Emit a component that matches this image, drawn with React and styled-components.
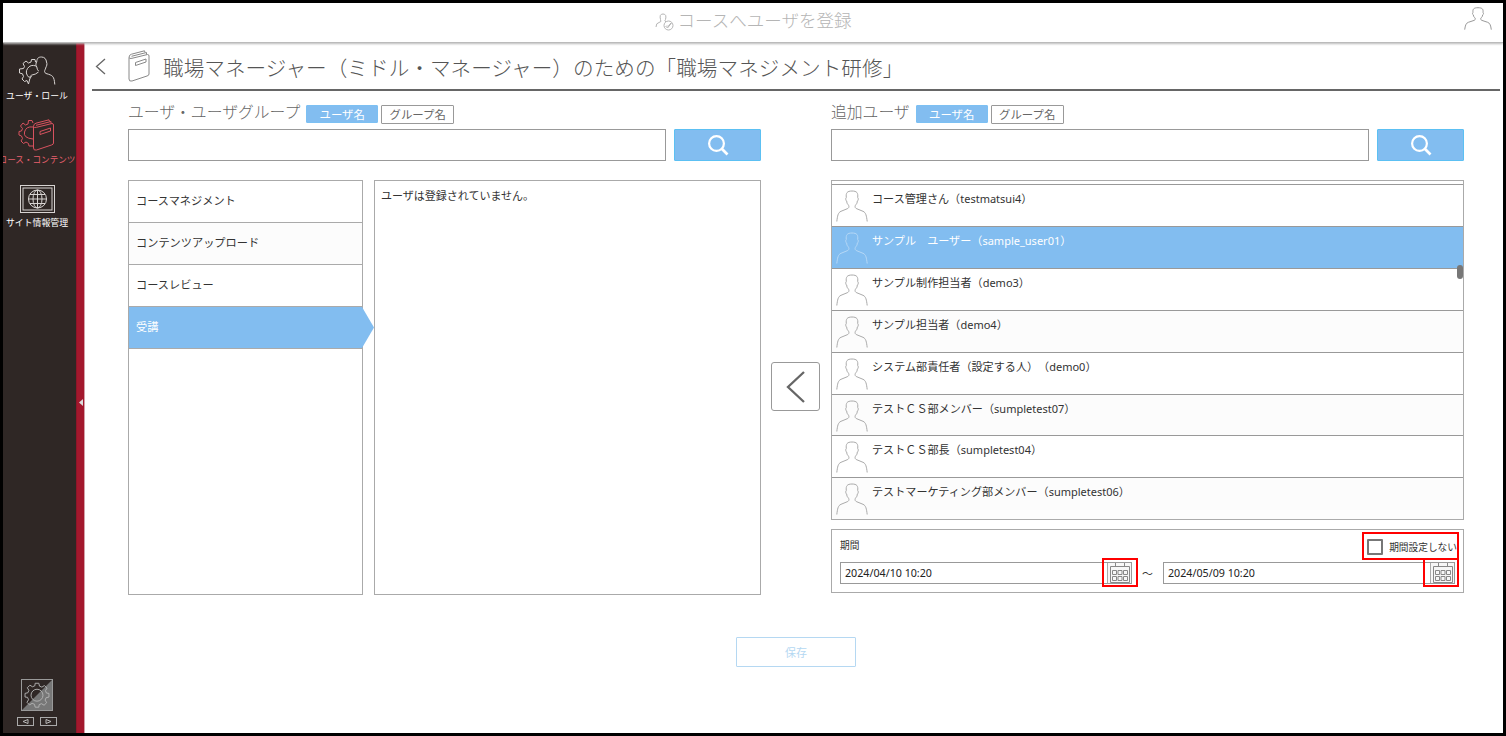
import React from 'react';
import styled, { createGlobalStyle } from 'styled-components';

const GlobalStyle = createGlobalStyle`
  * {
    box-sizing: border-box;
  }
  body {
    margin: 0;
    font-family: "Noto Sans", "Noto Sans CJK JP", sans-serif;
    font-size: 11px;
    color: #333;
    text-spacing-trim: space-all;
  }
`;

const Frame = styled.div`
  width: 1506px;
  height: 736px;
  border: 3px solid #000;
  background: #fff;
  display: flex;
  flex-direction: column;
  overflow: hidden;
`;

const Header = styled.header`
  position: relative;
  display: flex;
  flex: none;
  align-items: center;
  justify-content: center;
  height: 40px;
  padding-bottom: 5px;
  background: #fff;
  border-bottom: 1px solid #bbb;
  box-shadow: 0 1px 2px #bbb;
  z-index: 1;
  color: #b5b5b5;
  font-family: "Noto Sans CJK JP", sans-serif;
  font-size: 17.5px;
  font-weight: 300;
  line-height: 34px;
  svg {
    margin: 3px 4px 0 0;
  }
`;

const Account = styled.div`
  position: absolute;
  right: 7px;
  top: 1px;
  height: 28px;
  color: #999;
  line-height: 0;
`;

const Body = styled.div`
  display: flex;
  flex: 1;
  min-height: 0;
`;

const Sidebar = styled.nav`
  display: flex;
  flex-direction: column;
  align-items: center;
  width: 73px;
  padding-top: 13px;
  background: #2f2725;
  overflow: hidden;
`;

const NavItem = styled.a`
  display: flex;
  flex: none;
  flex-direction: column;
  align-items: center;
  height: ${props => (props.$active ? '66px' : '63px')};
  margin-left: -5px;
  color: ${props => (props.$active ? '#e8606e' : '#fff')};
  font-family: "Noto Sans CJK JP", sans-serif;
  font-size: ${props => (props.$active ? '8.6px' : '8.9px')};
  line-height: 14px;
  white-space: nowrap;
  svg {
    margin-bottom: ${props => (props.$active ? '1px' : '3px')};
    color: ${props => (props.$active ? '#d8525f' : '#d8d4d2')};
  }
`;

const Settings = styled.div`
  display: flex;
  flex-direction: column;
  align-items: center;
  margin: auto 0 7px -5px;
`;

const Pager = styled.div`
  display: flex;
  gap: 6px;
  margin-top: 6px;
`;

const PagerButton = styled.span`
  display: flex;
  align-items: center;
  justify-content: center;
  width: 17px;
  height: 9px;
  border: 1px solid #aaa;
`;

const Divider = styled.div`
  display: flex;
  align-items: center;
  justify-content: center;
  width: 9px;
  padding-top: 29px;
  background: #a3182d;
  border-left: 1px solid #8d1629;
  border-right: 1px solid #d3a0a8;
`;

const Main = styled.main`
  flex: 1;
  padding: 1px 3px 0 7px;
`;

const Title = styled.h1`
  display: flex;
  align-items: center;
  height: 47px;
  margin: 0;
  padding-left: 3px;
  border-bottom: 2px solid #666;
  color: #555;
  font-family: "Noto Sans CJK JP", sans-serif;
  font-size: 20.6px;
  font-weight: 300;
  letter-spacing: 0.05px;
  line-height: 30px;
  white-space: nowrap;
  .book {
    margin: 0 13px 2px 22px;
  }
`;

const Columns = styled.div`
  display: flex;
  padding: 9px 0 0 36px;
`;

const Column = styled.section`
  width: 633px;
`;

const Transfer = styled.div`
  display: flex;
  flex: none;
  justify-content: center;
  width: 70px;
  padding-top: 262px;
`;

const MoveButton = styled.button`
  display: flex;
  align-items: center;
  justify-content: center;
  flex: none;
  width: 49px;
  height: 49px;
  margin-right: 1px;
  padding: 0;
  background: #fff;
  border: 1px solid #999;
  border-radius: 3px;
`;

const Heading = styled.div`
  display: flex;
  align-items: center;
  height: 29px;
  padding-bottom: 5px;
  color: #666;
  font-family: "Noto Sans CJK JP", sans-serif;
  font-size: 15.8px;
  font-weight: 300;
  line-height: 24px;
`;

const Tab = styled.button`
  width: ${props => (props.$on ? '72px' : '73px')};
  height: ${props => (props.$on ? '18px' : '19px')};
  margin: 4px 0 0 ${props => (props.$on ? '6px' : '3px')};
  padding: 0;
  background: ${props => (props.$on ? '#82bdf0' : '#fff')};
  border: 1px solid ${props => (props.$on ? '#7cc0f3' : '#999')};
  border-radius: 1px;
  color: ${props => (props.$on ? '#fff' : '#666')};
  font-family: "Noto Sans CJK JP", sans-serif;
  font-size: 11.4px;
  line-height: 15px;
`;

const SearchBar = styled.div`
  display: flex;
  justify-content: space-between;
  height: 32px;
`;

const SearchInput = styled.input`
  width: 538px;
  border: 1px solid #999;
  outline: none;
`;

const SearchButton = styled.button`
  display: flex;
  align-items: center;
  justify-content: center;
  width: 87px;
  padding: 0;
  background: #82bdf0;
  border: 1px solid #5cc0f3;
  border-radius: 1px;
`;

const Lists = styled.div`
  display: flex;
  gap: 11px;
  height: 415px;
  margin-top: 19px;
`;

const RoleList = styled.div`
  width: 235px;
  border: 1px solid #aaa;
`;

const Role = styled.div`
  position: relative;
  height: 42px;
  padding: 11px 7px;
  background: ${props => (props.$selected ? '#82bdf0' : props.$alt ? '#fcfcfc' : '#fff')};
  border-bottom: 1px solid #aaa;
  color: ${props => (props.$selected ? '#fff' : '#333')};
  font-size: 11.2px;
  line-height: 17px;
`;

const Pointer = styled.svg`
  position: absolute;
  left: 233px;
  top: 0;
`;

const Members = styled.div`
  flex: 1;
  padding: 6px 6px;
  border: 1px solid #aaa;
  line-height: 17px;
`;

const UserList = styled.div`
  position: relative;
  height: 340px;
  margin-top: 19px;
  padding-top: 3px;
  border: 1px solid #aaa;
  overflow: hidden;
`;

const User = styled.div`
  display: flex;
  gap: 4px;
  height: 41.92px;
  padding-left: 4px;
  background: ${props => (props.$selected ? '#82bdf0' : props.$alt ? '#fcfcfc' : '#fff')};
  border-top: 1px solid #999;
  color: ${props => (props.$selected ? '#fff' : '#333')};
  font-size: 11.1px;
  line-height: 17px;
  white-space: pre;
  svg {
    flex: none;
    margin-top: 5px;
    color: ${props => (props.$selected ? '#b6d8f6' : '#aaa')};
  }
  p {
    margin: 5px 0 0;
  }
`;

const Login = styled.span`
  font-size: 11px;
`;

const Thumb = styled.div`
  position: absolute;
  right: 0;
  top: 84px;
  width: 6px;
  height: 14px;
  background: #777;
  border-radius: 3px;
`;

const Period = styled.div`
  position: relative;
  height: 64px;
  margin-top: 9px;
  padding: 0 8px;
  border: 1px solid #aaa;
`;

const PeriodHead = styled.div`
  display: flex;
  align-items: center;
  justify-content: space-between;
  height: 32px;
  padding-top: 1px;
  font-size: 9.7px;
`;

const PeriodLabel = styled.span`
  padding-bottom: 3px;
`;

const CheckLabel = styled.label`
  display: flex;
  align-items: center;
  gap: 6px;
  margin-right: -2px;
  white-space: nowrap;
`;

const Checkbox = styled.span`
  width: 16px;
  height: 16px;
  border: 2px solid #777;
  border-radius: 1px;
`;

const Dates = styled.div`
  display: flex;
  align-items: center;
  justify-content: space-between;
`;

const DateField = styled.div`
  display: flex;
  align-items: center;
  justify-content: space-between;
  width: 292px;
  height: 22px;
  padding-left: 4px;
  border: 1px solid #999;
  color: #222;
  font-size: 10.7px;
  line-height: 18px;
`;

const DateButton = styled.span`
  display: flex;
  justify-content: center;
  width: 24px;
  height: 20px;
  background: #f7f7f7;
  border-left: 1px solid #aaa;
`;

const Mark = styled.div`
  position: absolute;
  left: ${props => props.$x}px;
  top: ${props => props.$y}px;
  width: ${props => props.$w}px;
  height: ${props => props.$h}px;
  border: 2px solid #f00;
`;

const SaveButton = styled.button`
  display: block;
  width: 120px;
  height: 30px;
  margin: 42px 0 0 644px;
  background: #fff;
  border: 1px solid #b5d8f2;
  border-radius: 1px;
  color: #b5d8f2;
  font-family: "Noto Sans CJK JP", sans-serif;
  font-size: 11px;
  line-height: 24px;
`;

const GEAR = 'M-2-12h4l.7 3.1 2.6 1.1 2.8-1.7 2.8 2.8-1.7 2.8 1.1 2.6L13-1v4l-3.1.7-1.1 2.6 1.7 2.8-2.8 2.8-2.8-1.7-2.6 1.1L2 14h-4l-.7-3.1-2.6-1.1-2.8 1.7-2.8-2.8 1.7-2.8-1.1-2.6L-13 3v-4l3.1-.7 1.1-2.6-1.7-2.8 2.8-2.8 2.8 1.7 2.6-1.1z';
const BOOK = 'M1 7.5Q1.500 9 4 8.300L19.500 4.500Q21 4.500 21 6V24Q21 25.500 19 26L4 31Q1 31.800 1 29ZM1 7.500Q1 4.800 3.500 4.200L16.500 .8 17 2.500M3.500 6.300 18.500 2.500V4.500M7.500 12.500 18 9V12L7.500 15.500Z';

const PersonIcon = ({ width = 32, height = 32 }) => (
  <svg width={width} height={height} viewBox="0 0 32 32" fill="none" stroke="currentColor" preserveAspectRatio="none">
    <path vectorEffect="non-scaling-stroke" d="M.8 31.500C1.500 26 2 22.500 5 21.300L11.800 18.500C13.500 17.500 13 15.500 12 14.500C11 13.500 10.800 12.500 10.700 11C9.500 10.500 9.500 8 10.300 7.500C9.800 3 11 1 16 1S22.200 3 21.700 7.500C22.500 8 22.500 10.500 21.300 11C21.200 12.500 21 13.500 20 14.500C19 15.500 18.500 17.500 20.200 18.500L27 21.300C30 22.500 30.500 26 31.200 31.500" />
  </svg>
);

const UserRoleIcon = () => (
  <svg width="38" height="30" viewBox="0 0 38 30" fill="none" stroke="currentColor">
    <path d="M18.500 6H17.500L17 3.500H13.500L13 6 10.500 7 8 5 5 7.500 6.500 10.500 5.500 12.500 1.500 13V17L4.500 17.800 5.500 20.500 4 23 6.500 25.500 9 24.500 10.500 28Q11.500 22 13.500 20" />
    <path d="M18 10Q12.500 8 9.500 12.500T11 21.500Q13 18.500 17.500 18L20.500 16" />
    <path d="M18.800 11C17.300 9 18 7 18.700 6C19 2 20.500 1 23.500 1S28.200 3 28.500 6C29.500 8 28.500 10.500 28 11C27.500 14 25 15.500 28 17.500C35 19.500 36 20 36.800 28.500M18.800 11Q19 13.500 20.500 15" />
  </svg>
);

const CourseIcon = () => (
  <svg width="37" height="32" viewBox="0 0 37 32" fill="none" stroke="currentColor">
    <path d="M15 4 14 1.500H10.500L10 5 7.500 6 5 4 2.500 7 4.500 9.500 3.500 12 1 12.500V16L3.500 17 4.500 19.500 3 22 5.500 24.500 8 23 10.500 24.500 11 27H15" />
    <path d="M15 8Q8 7 6.500 13T15 20" />
    <g transform="translate(14.500 0)">
      <path d={BOOK} />
    </g>
  </svg>
);

const SiteIcon = () => (
  <svg width="35" height="28" viewBox="0 0 35 28" fill="none" stroke="currentColor">
    <rect x=".5" y=".5" width="34" height="27" />
    <rect x="3" y="3" width="29" height="22" />
    <circle cx="17.500" cy="14" r="9" />
    <ellipse cx="17.500" cy="14" rx="4.500" ry="9" />
    <path d="M17.500 5v18M8.500 14h18M10 9.500h15M10 18.500h15" />
  </svg>
);

const GearIcon = () => (
  <svg width="32" height="32" viewBox="0 0 32 32" fill="none">
    <path d="M32 0V32H0Z" fill="#777" />
    <rect x=".5" y=".5" width="31" height="31" stroke="#999" />
    <g stroke="#b5b5b5" transform="translate(16 15.300) scale(.92)">
      <path d={GEAR} />
      <circle cy="1" r="6.500" />
    </g>
  </svg>
);

const BookIcon = () => (
  <svg className="book" width="22" height="32" viewBox="0 0 22 32" fill="none" stroke="#888">
    <path d={BOOK} />
  </svg>
);

const EnrollIcon = () => (
  <svg width="19" height="18" viewBox="0 0 19 18" fill="none" stroke="currentColor">
    <path d="M1 14Q1 10 4 9.500Q7 9 5.500 6.500Q4 1 8 1T10.500 6.500Q9 8 11 9" />
    <circle cx="13.500" cy="12.500" r="4.500" />
    <path d="M10.500 13 12.500 15 16.500 10M12 12.500 13 13.500 16 10" />
  </svg>
);

const SearchIcon = () => (
  <svg width="22" height="22" viewBox="0 0 22 22" fill="none" stroke="#fff" strokeWidth="2.200">
    <circle cx="9.500" cy="9.500" r="7.400" />
    <path d="M14.800 14.800 20.500 20.500" strokeWidth="2.700" />
  </svg>
);

const CalendarIcon = () => (
  <svg width="20" height="20" viewBox="0 0 20 20" fill="none" stroke="#888">
    <path d="M.5 3.500h19v16H.5zM5.500 0v4M14.500 0v4" />
    <path d="M2.500 7.500h4v4h-4zM8 7.500h4v4H8zM13.500 7.500h4v4h-4zM2.500 13.500h4v4h-4zM8 13.500h4v4H8zM13.500 13.500h4v4h-4z" />
  </svg>
);

const Search = () => (
  <SearchBar>
    <SearchInput />
    <SearchButton><SearchIcon /></SearchButton>
  </SearchBar>
);

const PeriodDate = ({ value }) => (
  <DateField>
    {value}
    <DateButton><CalendarIcon /></DateButton>
  </DateField>
);

const roles = ['コースマネジメント', 'コンテンツアップロード', 'コースレビュー', '受講'];

const users = [
  ['コース管理さん', 'testmatsui4'],
  ['サンプル　ユーザー', 'sample_user01'],
  ['サンプル制作担当者', 'demo3'],
  ['サンプル担当者', 'demo4'],
  ['システム部責任者（設定する人）', 'demo0'],
  ['テストＣＳ部メンバー', 'sumpletest07'],
  ['テストＣＳ部長', 'sumpletest04'],
  ['テストマーケティング部メンバー', 'sumpletest06'],
];

const App = () => (
  <Frame lang="ja">
    <GlobalStyle />
    <Header>
      <EnrollIcon />
      コースへユーザを登録
      <Account><PersonIcon width={28} height={23} /></Account>
    </Header>
    <Body>
      <Sidebar>
        <NavItem><UserRoleIcon />ユーザ・ロール</NavItem>
        <NavItem $active><CourseIcon />コース・コンテンツ</NavItem>
        <NavItem><SiteIcon />サイト情報管理</NavItem>
        <Settings>
          <GearIcon />
          <Pager>
            <PagerButton>
              <svg width="7" height="5" viewBox="0 0 7 5" fill="none" stroke="#bbb"><path d="M6 .5v4L1 2.500z" /></svg>
            </PagerButton>
            <PagerButton>
              <svg width="7" height="5" viewBox="0 0 7 5" fill="none" stroke="#bbb"><path d="M1 .5v4L6 2.500z" /></svg>
            </PagerButton>
          </Pager>
        </Settings>
      </Sidebar>
      <Divider>
        <svg width="4" height="7" viewBox="0 0 4 7"><path d="M4 0v7L0 3.500z" fill="#ddd" /></svg>
      </Divider>
      <Main>
        <Title>
          <svg width="11" height="17" viewBox="0 0 11 17" fill="none" stroke="#666" strokeWidth="1.300"><path d="M10 1 1.500 8.500 10 16" /></svg>
          <BookIcon />
          職場マネージャー（ミドル・マネージャー）のための「職場マネジメント研修」
        </Title>
        <Columns>
          <Column>
            <Heading>
              ユーザ・ユーザグループ
              <Tab $on>ユーザ名</Tab>
              <Tab>グループ名</Tab>
            </Heading>
            <Search />
            <Lists>
              <RoleList>
                {roles.map((role, i) => (
                  <Role key={role} $alt={i % 2 === 1} $selected={i === 3}>
                    {role}
                    {i === 3 && (
                      <Pointer width="12" height="41" viewBox="0 0 12 41"><path d="M0 0 12 20.500 0 41z" fill="#82bdf0" /></Pointer>
                    )}
                  </Role>
                ))}
              </RoleList>
              <Members>ユーザは登録されていません。</Members>
            </Lists>
          </Column>
          <Transfer>
            <MoveButton>
              <svg width="19" height="32" viewBox="0 0 19 32" fill="none" stroke="#666" strokeWidth="2.300"><path d="M18 1 2 16 18 31" /></svg>
            </MoveButton>
          </Transfer>
          <Column>
            <Heading>
              追加ユーザ
              <Tab $on>ユーザ名</Tab>
              <Tab>グループ名</Tab>
            </Heading>
            <Search />
            <UserList>
              {users.map(([name, login], i) => (
                <User key={login} $alt={i % 2 === 1} $selected={i === 1}>
                  <PersonIcon />
                  <p>{name}（<Login>{login}</Login>）</p>
                </User>
              ))}
              <Thumb />
            </UserList>
            <Period>
              <PeriodHead>
                <PeriodLabel>期間</PeriodLabel>
                <CheckLabel><Checkbox />期間設定しない</CheckLabel>
              </PeriodHead>
              <Dates>
                <PeriodDate value="2024/04/10 10:20" />
                ～
                <PeriodDate value="2024/05/09 10:20" />
              </Dates>
              <Mark $x={530} $y={2} $w={97} $h={28} />
              <Mark $x={270} $y={28} $w={36} $h={29} />
              <Mark $x={591} $y={28} $w={36} $h={29} />
            </Period>
          </Column>
        </Columns>
        <SaveButton>保存</SaveButton>
      </Main>
    </Body>
  </Frame>
);

export default App;
